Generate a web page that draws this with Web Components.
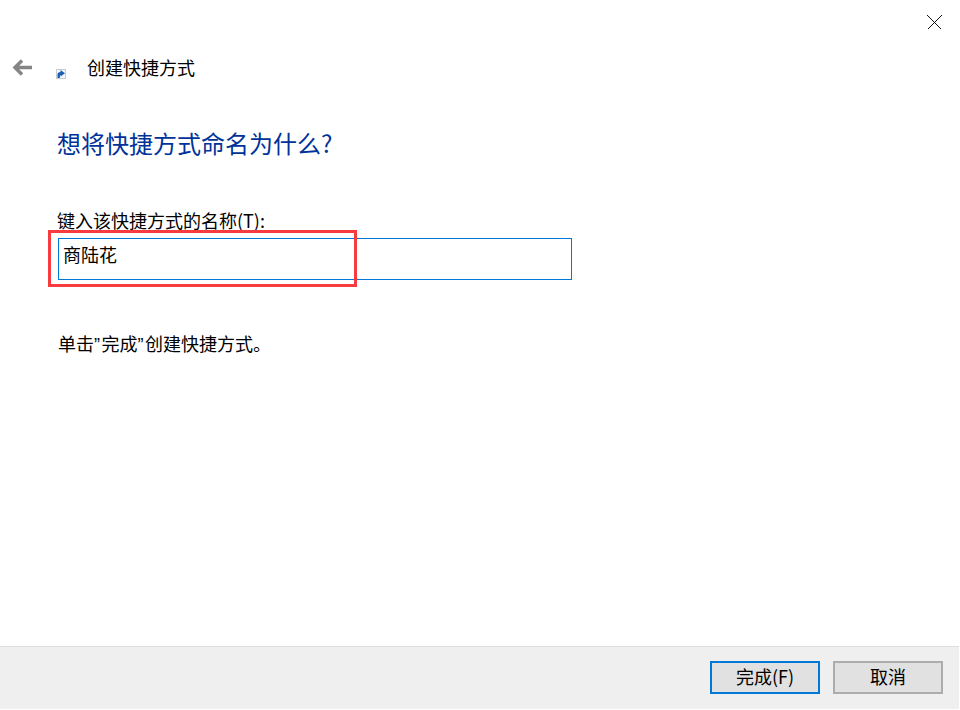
<!DOCTYPE html>
<html lang="zh">
<head>
<meta charset="utf-8">
<title>创建快捷方式</title>
<style>
  html, body { margin: 0; padding: 0; background: #fff; }
  body { font-family: "Noto Sans CJK SC", "Liberation Sans", sans-serif; font-size: 18px; color: #000; }
</style>
</head>
<body>
<wizard-dialog>
  <wizard-header slot="header">创建快捷方式</wizard-header>
  <wizard-name-page heading="想将快捷方式命名为什么?" label="键入该快捷方式的名称(T):" value="商陆花" hint="单击”完成”创建快捷方式。"></wizard-name-page>
  <wizard-footer slot="footer">
    <wizard-button primary>完成(F)</wizard-button>
    <wizard-button>取消</wizard-button>
  </wizard-footer>
</wizard-dialog>

<script>
class WizardDialog extends HTMLElement {
  constructor() {
    super();
    this.attachShadow({ mode: "open" });
  }

  connectedCallback() {
    this.shadowRoot.innerHTML = `
      <style>
        :host {
          display: flex;
          flex-direction: column;
          width: 959px;
          height: 709px;
          position: relative;
        }
        .close {
          position: absolute;
          left: 927px;
          top: 15px;
          width: 15px;
          height: 15px;
        }
        main { flex: 1; }
      </style>
      <svg class="close" viewBox="0 0 15 15" shape-rendering="crispEdges">
        <path d="M0.5 0.5L14.5 14.5M14.5 0.5L0.5 14.5" stroke="#111" stroke-width="1" fill="none"/>
      </svg>
      <slot name="header"></slot>
      <main><slot></slot></main>
      <slot name="footer"></slot>
    `;
  }
}

class WizardHeader extends HTMLElement {
  constructor() {
    super();
    this.attachShadow({ mode: "open" });
  }

  connectedCallback() {
    this.shadowRoot.innerHTML = `
      <style>
        :host {
          display: flex;
          align-items: center;
          height: 55px;
          padding: 40px 0 0 12px;
          font-size: 18px;
          line-height: 55px;
        }
        .back { width: 21px; height: 17px; margin-top: -1px; }
        .icon { width: 10px; height: 10px; margin: 12px 21px 0 23px; }
      </style>
      <svg class="back" viewBox="0 0 21 17">
        <path d="M10 1.500L3 8.500L10 15.500M3.500 8.500H20" stroke="#858585" stroke-width="3.500" fill="none"/>
      </svg>
      <svg class="icon" viewBox="0 0 10 10">
        <rect x="0.500" y="0.500" width="9" height="9" fill="#f4f6f8" stroke="#c9ced4"/>
        <path d="M1.500 9V5.500Q1.500 3 4.500 3V1L9 4.200L4.500 7.400V5.400Q3.800 5.600 3.800 9Z" fill="#1a5fb0"/>
      </svg>
      <span><slot></slot></span>
    `;
  }
}

class WizardNamePage extends HTMLElement {
  constructor() {
    super();
    this.attachShadow({ mode: "open" });
  }

  connectedCallback() {
    this.shadowRoot.innerHTML = `
      <style>
        :host {
          display: flex;
          flex-direction: column;
          padding: 0 0 0 58px;
        }
        h1 {
          margin: 32px 0 0 -1px;
          font-size: 24px;
          font-weight: 400;
          line-height: 32px;
          color: #003399;
        }
        label { margin: 48px 0 5px -1px; line-height: 26px; }
        .field {
          position: relative;
          box-sizing: border-box;
          width: 514px;
          height: 42px;
          border: 1px solid #0078d7;
          padding-left: 4px;
          line-height: 30px;
        }
        .mark {
          position: absolute;
          left: -11px;
          top: -9px;
          width: 309px;
          height: 57px;
          box-sizing: border-box;
          border: 3px solid #f73b3f;
        }
        p { margin: 50px 0 0; line-height: 26px; }
        .quote {
          font-family: "Liberation Sans", sans-serif;
          letter-spacing: 1.5px;
        }
      </style>
      <h1></h1>
      <label></label>
      <div class="field"><span class="value"></span><div class="mark"></div></div>
      <p></p>
    `;
    this.shadowRoot.querySelector("h1").textContent = this.getAttribute("heading");
    this.shadowRoot.querySelector("label").textContent = this.getAttribute("label");
    this.shadowRoot.querySelector(".value").textContent = this.getAttribute("value");

    // the dialog's quote marks are narrow, so they get their own font
    const hint = this.shadowRoot.querySelector("p");
    this.getAttribute("hint").split(/(”)/).forEach((part) => {
      if (part === "”") {
        const quote = document.createElement("span");
        quote.className = "quote";
        quote.textContent = part;
        hint.append(quote);
      } else {
        hint.append(part);
      }
    });
  }
}

class WizardFooter extends HTMLElement {
  constructor() {
    super();
    this.attachShadow({ mode: "open" });
  }

  connectedCallback() {
    this.shadowRoot.innerHTML = `
      <style>
        :host {
          display: flex;
          justify-content: flex-end;
          align-items: flex-start;
          gap: 13px;
          box-sizing: border-box;
          height: 63px;
          padding: 14px 16px 0 0;
          background: #efefef;
          border-top: 1px solid #dfdfdf;
        }
      </style>
      <slot></slot>
    `;
  }
}

class WizardButton extends HTMLElement {
  constructor() {
    super();
    this.attachShadow({ mode: "open" });
  }

  connectedCallback() {
    this.shadowRoot.innerHTML = `
      <style>
        :host {
          display: flex;
          align-items: center;
          justify-content: center;
          box-sizing: border-box;
          width: 110px;
          height: 33px;
          padding-bottom: 3px;
          font-size: 18px;
          line-height: 26px;
          background: #e1e1e1;
          border: 2px solid #adadad;
        }
        :host([primary]) { border-color: #0078d7; }
      </style>
      <slot></slot>
    `;
  }
}

customElements.define("wizard-dialog", WizardDialog);
customElements.define("wizard-header", WizardHeader);
customElements.define("wizard-name-page", WizardNamePage);
customElements.define("wizard-footer", WizardFooter);
customElements.define("wizard-button", WizardButton);
</script>
</body>
</html>
